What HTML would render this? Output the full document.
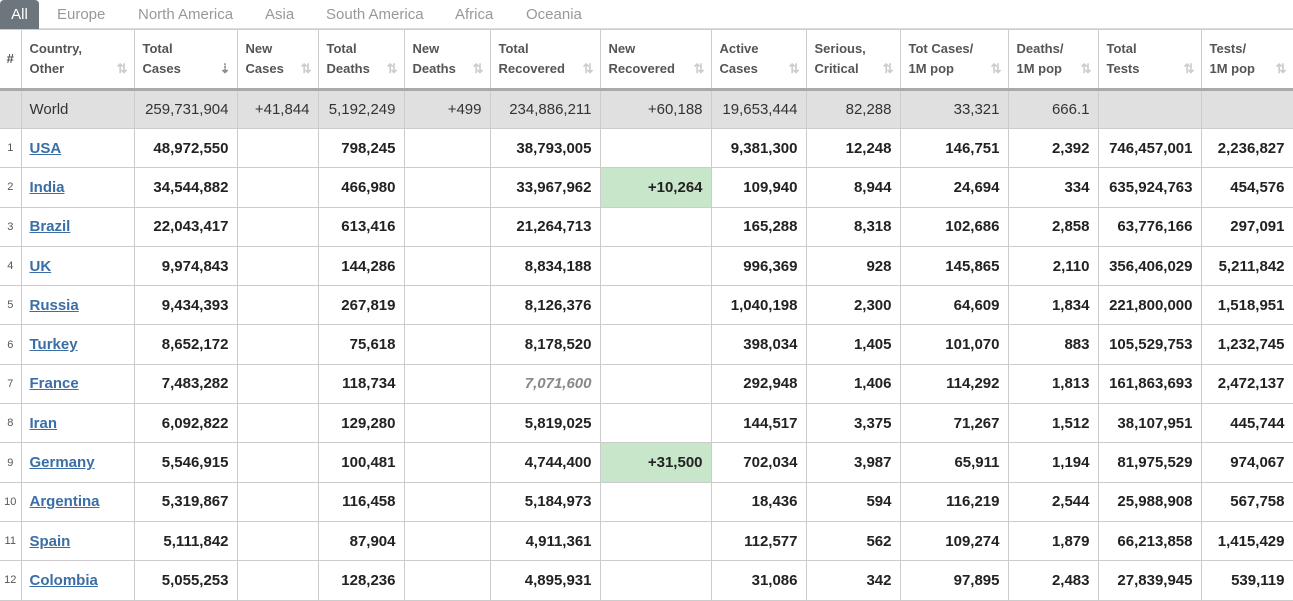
<!DOCTYPE html>
<html><head><style>
body{margin:0;background:#fff;font-family:"Liberation Sans",Arial,sans-serif;width:1293px;height:593px;overflow:hidden}
.tabs{height:29px;position:relative;border-bottom:1px solid #ddd;box-sizing:border-box}
.tabs span{position:absolute;top:6px;font-size:15px;color:#999}
.tabs .all{left:0;top:0;width:39px;height:29px;background:#6e767d;color:#fff;border-radius:4px 4px 0 0;text-align:center;line-height:29px}
table{border-collapse:collapse;table-layout:fixed;width:1293px;position:absolute;top:29px;left:0}
td,th{border:1px solid #ccc;padding:0 8px;font-size:15px;color:#222;text-align:right;white-space:nowrap;overflow:hidden}
th{height:58px;font-size:13px;color:#555;text-align:left;vertical-align:middle;line-height:20px;position:relative;border-bottom:3px solid #aaa;padding-top:0}
th i{position:absolute;right:6px;bottom:9px;font-style:normal;color:#ccc;font-size:13px;font-weight:bold}
tr.w td{background:#e0e0e0;font-weight:normal;color:#333;height:37px}
tr.r td{font-weight:bold;height:38.3px}
td.n{font-size:11px;color:#555;font-weight:normal!important;text-align:center;padding:0}
td.c{text-align:left}
td.c a{color:#3a6ea5;text-decoration:underline}
td.g{background:#c8e6c9}
th:first-child{border-left:none;padding:0;text-align:center}
td:first-child{border-left:none}
</style></head><body>
<div class="tabs"><span class="all">All</span><span style="left:57px">Europe</span><span style="left:138px">North America</span><span style="left:265px">Asia</span><span style="left:326px">South America</span><span style="left:455px">Africa</span><span style="left:526px">Oceania</span></div>
<table>
<colgroup><col style="width:21px"><col style="width:113px"><col style="width:103px"><col style="width:81px"><col style="width:86px"><col style="width:86px"><col style="width:110px"><col style="width:111px"><col style="width:95px"><col style="width:94px"><col style="width:108px"><col style="width:90px"><col style="width:103px"><col style="width:92px"></colgroup>
<tr><th>#</th><th>Country,<br>Other<i>⇅</i></th><th>Total<br>Cases<i style="color:#888">⇣</i></th><th>New<br>Cases<i>⇅</i></th><th>Total<br>Deaths<i>⇅</i></th><th>New<br>Deaths<i>⇅</i></th><th>Total<br>Recovered<i>⇅</i></th><th>New<br>Recovered<i>⇅</i></th><th>Active<br>Cases<i>⇅</i></th><th>Serious,<br>Critical<i>⇅</i></th><th>Tot Cases/<br>1M pop<i>⇅</i></th><th>Deaths/<br>1M pop<i>⇅</i></th><th>Total<br>Tests<i>⇅</i></th><th>Tests/<br>1M pop<i>⇅</i></th></tr>
<tr class="w"><td></td><td class="c">World</td><td>259,731,904</td><td>+41,844</td><td>5,192,249</td><td>+499</td><td>234,886,211</td><td>+60,188</td><td>19,653,444</td><td>82,288</td><td>33,321</td><td>666.1</td><td></td><td></td></tr>
<tr class="r"><td class="n">1</td><td class="c"><a>USA</a></td><td>48,972,550</td><td></td><td>798,245</td><td></td><td>38,793,005</td><td></td><td>9,381,300</td><td>12,248</td><td>146,751</td><td>2,392</td><td>746,457,001</td><td>2,236,827</td></tr>
<tr class="r"><td class="n">2</td><td class="c"><a>India</a></td><td>34,544,882</td><td></td><td>466,980</td><td></td><td>33,967,962</td><td class="g">+10,264</td><td>109,940</td><td>8,944</td><td>24,694</td><td>334</td><td>635,924,763</td><td>454,576</td></tr>
<tr class="r"><td class="n">3</td><td class="c"><a>Brazil</a></td><td>22,043,417</td><td></td><td>613,416</td><td></td><td>21,264,713</td><td></td><td>165,288</td><td>8,318</td><td>102,686</td><td>2,858</td><td>63,776,166</td><td>297,091</td></tr>
<tr class="r"><td class="n">4</td><td class="c"><a>UK</a></td><td>9,974,843</td><td></td><td>144,286</td><td></td><td>8,834,188</td><td></td><td>996,369</td><td>928</td><td>145,865</td><td>2,110</td><td>356,406,029</td><td>5,211,842</td></tr>
<tr class="r"><td class="n">5</td><td class="c"><a>Russia</a></td><td>9,434,393</td><td></td><td>267,819</td><td></td><td>8,126,376</td><td></td><td>1,040,198</td><td>2,300</td><td>64,609</td><td>1,834</td><td>221,800,000</td><td>1,518,951</td></tr>
<tr class="r"><td class="n">6</td><td class="c"><a>Turkey</a></td><td>8,652,172</td><td></td><td>75,618</td><td></td><td>8,178,520</td><td></td><td>398,034</td><td>1,405</td><td>101,070</td><td>883</td><td>105,529,753</td><td>1,232,745</td></tr>
<tr class="r"><td class="n">7</td><td class="c"><a>France</a></td><td>7,483,282</td><td></td><td>118,734</td><td></td><td style="font-style:italic;color:#888">7,071,600</td><td></td><td>292,948</td><td>1,406</td><td>114,292</td><td>1,813</td><td>161,863,693</td><td>2,472,137</td></tr>
<tr class="r"><td class="n">8</td><td class="c"><a>Iran</a></td><td>6,092,822</td><td></td><td>129,280</td><td></td><td>5,819,025</td><td></td><td>144,517</td><td>3,375</td><td>71,267</td><td>1,512</td><td>38,107,951</td><td>445,744</td></tr>
<tr class="r"><td class="n">9</td><td class="c"><a>Germany</a></td><td>5,546,915</td><td></td><td>100,481</td><td></td><td>4,744,400</td><td class="g">+31,500</td><td>702,034</td><td>3,987</td><td>65,911</td><td>1,194</td><td>81,975,529</td><td>974,067</td></tr>
<tr class="r"><td class="n">10</td><td class="c"><a>Argentina</a></td><td>5,319,867</td><td></td><td>116,458</td><td></td><td>5,184,973</td><td></td><td>18,436</td><td>594</td><td>116,219</td><td>2,544</td><td>25,988,908</td><td>567,758</td></tr>
<tr class="r"><td class="n">11</td><td class="c"><a>Spain</a></td><td>5,111,842</td><td></td><td>87,904</td><td></td><td>4,911,361</td><td></td><td>112,577</td><td>562</td><td>109,274</td><td>1,879</td><td>66,213,858</td><td>1,415,429</td></tr>
<tr class="r"><td class="n">12</td><td class="c"><a>Colombia</a></td><td>5,055,253</td><td></td><td>128,236</td><td></td><td>4,895,931</td><td></td><td>31,086</td><td>342</td><td>97,895</td><td>2,483</td><td>27,839,945</td><td>539,119</td></tr>
</table>
</body></html>
